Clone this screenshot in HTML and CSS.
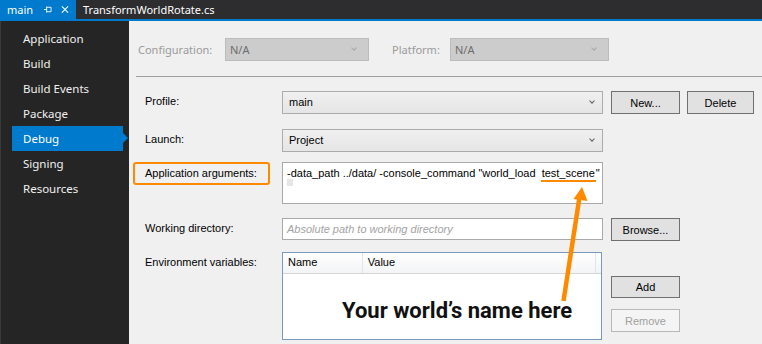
FILE: index.html
```html
<!DOCTYPE html>
<html lang="en">
<head>
    <meta charset="UTF-8">
    <title>Debug Properties</title>
    <link rel="stylesheet" href="styles.css">
</head>
<body>
    <div class="tabbar">
        <div class="tab active">
            <span>main</span>
            <svg class="pin" width="9" height="9" viewBox="0 0 9 9">
                <path d="M0 4.5H3M3 1V8M3 2H8V7H3" fill="none" stroke="#fff" stroke-width="1"/>
            </svg>
            <svg class="close" width="9" height="9" viewBox="0 0 9 9">
                <path d="M1 1L8 8M8 1L1 8" fill="none" stroke="#fff" stroke-width="1.2"/>
            </svg>
        </div>
        <div class="tab">TransformWorldRotate.cs</div>
    </div>
    <div class="tabline"></div>

    <div class="workspace">
        <ul class="sidebar">
            <li>Application</li>
            <li>Build</li>
            <li>Build Events</li>
            <li>Package</li>
            <li class="selected">Debug</li>
            <li>Signing</li>
            <li>Resources</li>
        </ul>

        <div class="page">
            <div class="config-row">
                <span class="config-label">Configuration:</span>
                <div class="combo disabled config-combo">N/A<span class="chev"></span></div>
                <span class="config-label platform-label">Platform:</span>
                <div class="combo disabled platform-combo">N/A<span class="chev"></span></div>
            </div>
            <div class="separator"></div>

            <div class="form">
                <div class="row">
                    <label class="label">Profile:</label>
                    <div class="combo field">main<span class="chev"></span></div>
                    <button class="btn">New...</button>
                    <button class="btn btn-wide">Delete</button>
                </div>
                <div class="row row-launch">
                    <label class="label">Launch:</label>
                    <div class="combo field">Project<span class="chev"></span></div>
                </div>
                <div class="row row-args">
                    <label class="label highlight">Application arguments:</label>
                    <div class="textbox args">
                        <div>-data_path ../data/ -console_command "world_load&nbsp; <span class="mark">test_scene</span>"</div>
                        <div class="caret"></div>
                    </div>
                </div>
                <div class="row row-dir">
                    <label class="label">Working directory:</label>
                    <div class="textbox dir"><span class="placeholder">Absolute path to working directory</span></div>
                    <button class="btn">Browse...</button>
                </div>
                <div class="row row-env">
                    <label class="label">Environment variables:</label>
                    <div class="listview">
                        <div class="list-head">
                            <span class="col-name">Name</span>
                            <span class="col-value">Value</span>
                            <span class="col-rest"></span>
                        </div>
                    </div>
                    <div class="env-buttons">
                        <button class="btn">Add</button>
                        <button class="btn off">Remove</button>
                    </div>
                </div>
            </div>
        </div>
    </div>

    <svg class="arrow" width="762" height="344" viewBox="0 0 762 344">
        <path d="M563.5 301L579.5 197" stroke="#ff8a00" stroke-width="4.5" fill="none"/>
        <path d="M582 187L587.5 201L573.5 199Z" fill="#ff8a00"/>
    </svg>
    <div class="callout">Your world’s name here</div>
</body>
</html>
```

FILE: styles.css
```css
body {
    margin: 0;
    width: 762px;
    height: 344px;
    overflow: hidden;
    position: relative;
    background: #f0f0f0;
    font-family: 'Liberation Sans', Arial, sans-serif;
    font-size: 11px;
    color: #000;
}
.tabbar {
    height: 19px;
    display: flex;
    background: #2d2d30;
    font-family: 'Noto Sans', sans-serif;
    font-size: 11px;
    color: #fff;
}
.tab {
    display: flex;
    align-items: center;
    padding: 0 7px;
    line-height: 19px;
}
.tab.active {
    background: #007acc;
    width: 62px;
    padding-right: 7px;
}
.tab.active span { margin-right: 11px; }
.pin { margin-right: 9px; }
.tabline {
    height: 2px;
    background: #007acc;
}
.workspace {
    display: flex;
    height: 323px;
}
.sidebar {
    list-style: none;
    margin: 0;
    padding: 5px 0 0 0;
    width: 128px;
    background: #252526;
    border-left: 1px solid #3a3a3c;
    font-family: 'Noto Sans', sans-serif;
    font-size: 11.5px;
    color: #f1f1f1;
}
.sidebar li {
    height: 25px;
    line-height: 25px;
    margin-left: 11px;
    width: 100px;
    padding-left: 11px;
    position: relative;
}
.sidebar li.selected {
    background: #007acc;
    color: #fff;
}
.sidebar li.selected::after {
    content: '';
    position: absolute;
    right: -5px;
    top: 7px;
    border-left: 5px solid #007acc;
    border-top: 5px solid transparent;
    border-bottom: 5px solid transparent;
}
.page {
    flex: 1;
    padding-top: 17px;
}
.config-row {
    display: flex;
    align-items: center;
    height: 23px;
    padding-left: 9px;
}
.config-label {
    font-family: 'Noto Sans', sans-serif;
    font-size: 11px;
    color: #9a9a9a;
    width: 87px;
}
.platform-label {
    width: 58px;
}
.combo {
    position: relative;
    box-sizing: border-box;
    height: 23px;
    border: 1px solid #acacac;
    background: linear-gradient(#f0f0f0, #e5e5e5);
    padding-left: 6px;
    line-height: 21px;
}
.combo .chev {
    position: absolute;
    right: 8px;
    top: 7px;
    width: 3px;
    height: 3px;
    border-right: 1px solid #606060;
    border-bottom: 1px solid #606060;
    transform: rotate(45deg);
}
.combo.disabled {
    background: #cccccc;
    border-color: #bcbcbc;
    color: #6d6d6d;
    font-family: 'Noto Sans', sans-serif;
    padding-left: 4px;
}
.combo.disabled .chev {
    border-color: #a8a8a8;
    right: 12px;
}
.config-combo {
    width: 144px;
    margin-right: 23px;
}
.platform-combo {
    width: 159px;
}
.separator {
    height: 1px;
    background: #a0a0a0;
    margin: 15px 0 0 7px;
}
.form {
    padding: 14px 0 0 16px;
}
.row {
    display: flex;
    align-items: flex-start;
}
.row-launch { margin-top: 15px; }
.row-args { margin-top: 10px; }
.row-dir { margin-top: 14px; }
.row-env { margin-top: 11px; }
.label {
    width: 137px;
    padding-top: 3px;
    line-height: 14px;
    flex-shrink: 0;
}
.label.highlight {
    box-sizing: border-box;
    width: 137px;
    margin-left: -12px;
    margin-right: 12px;
    padding: 0 0 0 10px;
    height: 23px;
    line-height: 19px;
    border: 2px solid #ff8a00;
    border-radius: 3px;
}
.field {
    width: 321px;
}
.btn {
    box-sizing: border-box;
    height: 23px;
    width: 69px;
    margin-left: 8px;
    border: 1px solid #707070;
    background: #e1e1e1;
    font-family: 'Liberation Sans', Arial, sans-serif;
    font-size: 11px;
    color: #000;
    padding: 0;
}
.btn-wide {
    width: 67px;
    margin-left: 7px;
}
.btn.off {
    background: #f4f4f4;
    border-color: #b8b8b8;
    color: #a0a0a0;
}
.textbox {
    box-sizing: border-box;
    width: 321px;
    border: 1px solid #a9a9a9;
    background: #fff;
    padding: 3px 0 0 4px;
    line-height: 14px;
}
.args { height: 42px; }
.mark {
    display: inline-block;
    line-height: 12px;
    border-bottom: 2px solid #ff8a00;
    padding: 0 1px 1px;
    margin-left: -1px;
}
.caret {
    width: 6px;
    height: 7px;
    margin-top: -3px;
    background: #e6e6e6;
}
.dir {
    height: 22px;
    padding-top: 3px;
}
.placeholder {
    font-style: italic;
    color: #a3a3a3;
}
.listview {
    box-sizing: border-box;
    width: 320px;
    height: 88px;
    border: 1px solid #7a99bf;
    background: #fff;
}
.list-head {
    display: flex;
    height: 20px;
    line-height: 19px;
    background: linear-gradient(#ffffff, #f3f4f6);
    border-bottom: 1px solid #d5d5d5;
}
.list-head span {
    box-sizing: border-box;
    padding-left: 5px;
    border-right: 1px solid #e3e5e8;
}
.col-name { width: 80px; }
.col-value { width: 234px; }
.col-rest { flex: 1; border-right: none !important; }
.env-buttons {
    display: flex;
    flex-direction: column;
    gap: 11px;
    padding-top: 24px;
}
.env-buttons .btn {
    margin-left: 9px;
    height: 22px;
}
.env-buttons .btn.off { height: 23px; }
.arrow {
    position: absolute;
    left: 0;
    top: 0;
    pointer-events: none;
}
.callout {
    position: absolute;
    left: 342px;
    top: 297px;
    font-family: Roboto, sans-serif;
    font-weight: 700;
    font-size: 22px;
    line-height: 28px;
    color: #111;
    letter-spacing: 0;
}
```
